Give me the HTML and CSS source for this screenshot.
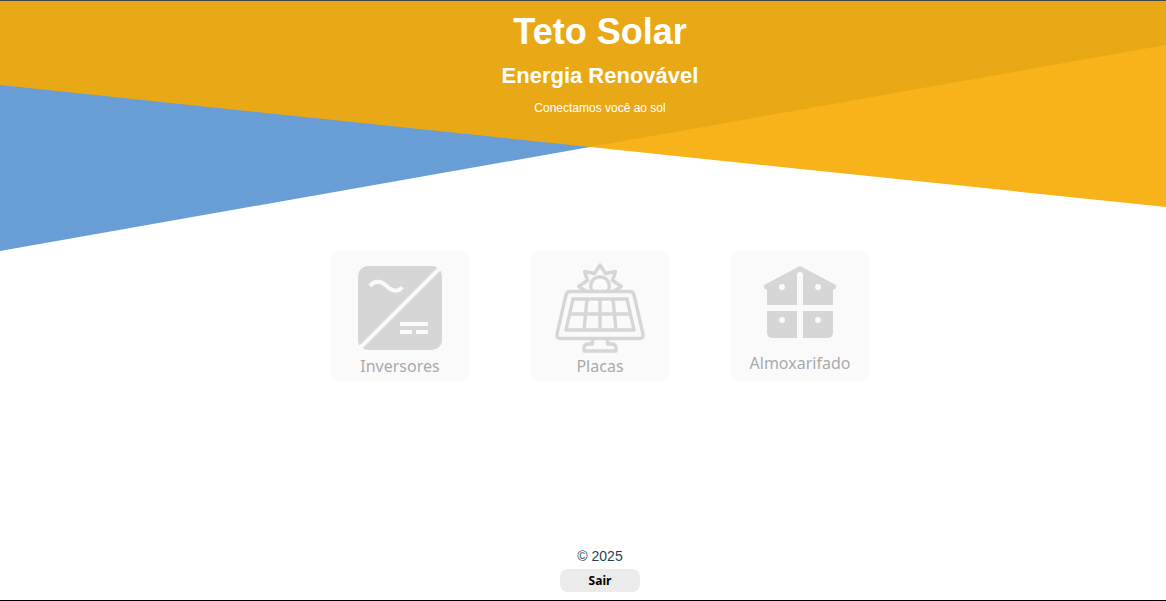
FILE: index.html
```html
<!DOCTYPE html>
<html lang="pt-BR">
<head>
<meta charset="utf-8">
<title>Teto Solar</title>
<link rel="stylesheet" href="styles.css">
</head>
<body>
<div class="page">
  <svg class="backdrop" viewBox="0 0 1166 250" preserveAspectRatio="none" aria-hidden="true">
    <path fill="#689dd6" d="M0 0H590V146L0 250Z"/>
    <path fill="#f8b31a" d="M590 0H1166V206L590 146Z"/>
    <path fill="#e9a917" d="M0 0H1166V44L590 146L0 84Z"/>
  </svg>
  <header class="header">
    <h1 class="title">Teto Solar</h1>
    <h2 class="subtitle">Energia Renovável</h2>
    <p class="tagline">Conectamos você ao sol</p>
  </header>
  <main class="menu">
    <button class="card" type="button">
      <svg class="icon" viewBox="0 0 96 96" aria-hidden="true">
        <rect x="6" y="6" width="84" height="84" rx="10" fill="#d6d6d6"/>
        <g fill="none" stroke="#fafafa" stroke-width="4">
          <path d="M6 90L91 5"/>
          <path d="M18 26C23 20 29 21 34 25.500C39 31 46 33 50 27"/>
          <path d="M48 64H76M48 72H60M64 72H76"/>
        </g>
      </svg>
      <span class="label">Inversores</span>
    </button>
    <button class="card" type="button">
      <svg class="icon" viewBox="0 0 96 96" aria-hidden="true">
        <g fill="none" stroke="#d6d6d6" stroke-width="3.400" stroke-linejoin="round">
          <path d="M40.500 31.500A9.300 9.300 0 1 1 55.500 31.500"/>
          <path d="M34 31L26.500 26.500L35.500 20.500L32.500 11.500L42.500 13.500L48 5L53.500 13.500L63.500 11.500L60.500 20.500L69.500 26.500L62 31"/>
          <path d="M18 31.500H78Q81 31.500 82 35L91 74Q92 78.500 87 78.500H9Q4 78.500 5 74L14 35Q15 31.500 18 31.500Z"/>
          <path d="M21 39H75L82 70H14ZM17.500 54H78.500M35 39L32 70M48 39V70M61 39L64 70"/>
          <path d="M40.500 79V84H37Q32 84 32 88V91H64V88Q64 84 59 84H55.500V79"/>
        </g>
      </svg>
      <span class="label">Placas</span>
    </button>
    <button class="card" type="button">
      <svg class="icon icon-house" viewBox="0 0 90 90" aria-hidden="true">
        <path fill="#d6d6d6" d="M12 42V27Q8 26 9 22.500L10 21.500L43 4Q45 2.500 47 4L80 21.500L81 22.500Q82 26 78 27V42H48V12Q48 9 45 9Q42 9 42 12V42ZM12 48H42V75H18Q12 75 12 69ZM48 48H78V69Q78 75 72 75H48Z"/>
        <g fill="#fafafa"><circle cx="27" cy="24" r="3"/><circle cx="63" cy="24" r="3"/><circle cx="27" cy="57" r="3"/><circle cx="63" cy="57" r="3"/></g>
      </svg>
      <span class="label">Almoxarifado</span>
    </button>
  </main>
  <footer class="footer">
    <p class="copyright">© 2025</p>
    <button class="logout" type="button">Sair</button>
  </footer>
</div>
</body>
</html>
```
FILE: styles.css
```css
* {
  box-sizing: border-box;
}

body {
  margin: 0;
  background: #fff;
  font-family: "Liberation Sans", Arial, sans-serif;
}

.page {
  position: relative;
  display: flex;
  flex-direction: column;
  align-items: center;
  min-height: 100vh;
  padding-left: 34px;
  border-top: 1px solid #444;
  border-bottom: 1px solid #000;
}

.backdrop {
  position: absolute;
  inset: 0 0 auto;
  z-index: -1;
  width: 100%;
  height: 250px;
}

.header {
  padding-top: 9px;
  color: #fff;
  text-align: center;
}

.title,
.subtitle,
.tagline,
.copyright {
  margin: 0;
}

.title {
  font-size: 36px;
  line-height: 44px;
}

.subtitle {
  margin-top: 8px;
  font-size: 22px;
  line-height: 28px;
}

.tagline {
  margin-top: 10px;
  font-size: 12px;
  line-height: 16px;
}

.menu {
  display: flex;
  flex-wrap: wrap;
  justify-content: center;
  gap: 60px;
  margin-top: 135px;
}

.card {
  display: flex;
  flex-direction: column;
  align-items: center;
  width: 140px;
  height: 130px;
  padding: 9px 0 0;
  border: 0;
  border-radius: 10px;
  background: #fafafa;
}

.icon {
  width: 96px;
  height: 96px;
}

.icon-house {
  width: 90px;
  height: 90px;
  margin: 3px 0 0;
}

.label {
  color: #aaa;
  font-family: "Noto Sans", sans-serif;
  font-size: 16px;
  line-height: 20px;
}

.footer {
  display: flex;
  flex-direction: column;
  align-items: center;
  gap: 4px;
  margin-top: auto;
  padding-bottom: 8px;
}

.copyright {
  color: #2c3e50;
  font-size: 14px;
  line-height: 18px;
}

.logout {
  width: 80px;
  height: 23px;
  padding: 0;
  border: 0;
  border-radius: 8px;
  background: #ebebeb;
  color: #000;
  font: bold 12px/20px "Noto Sans", sans-serif;
}
```
